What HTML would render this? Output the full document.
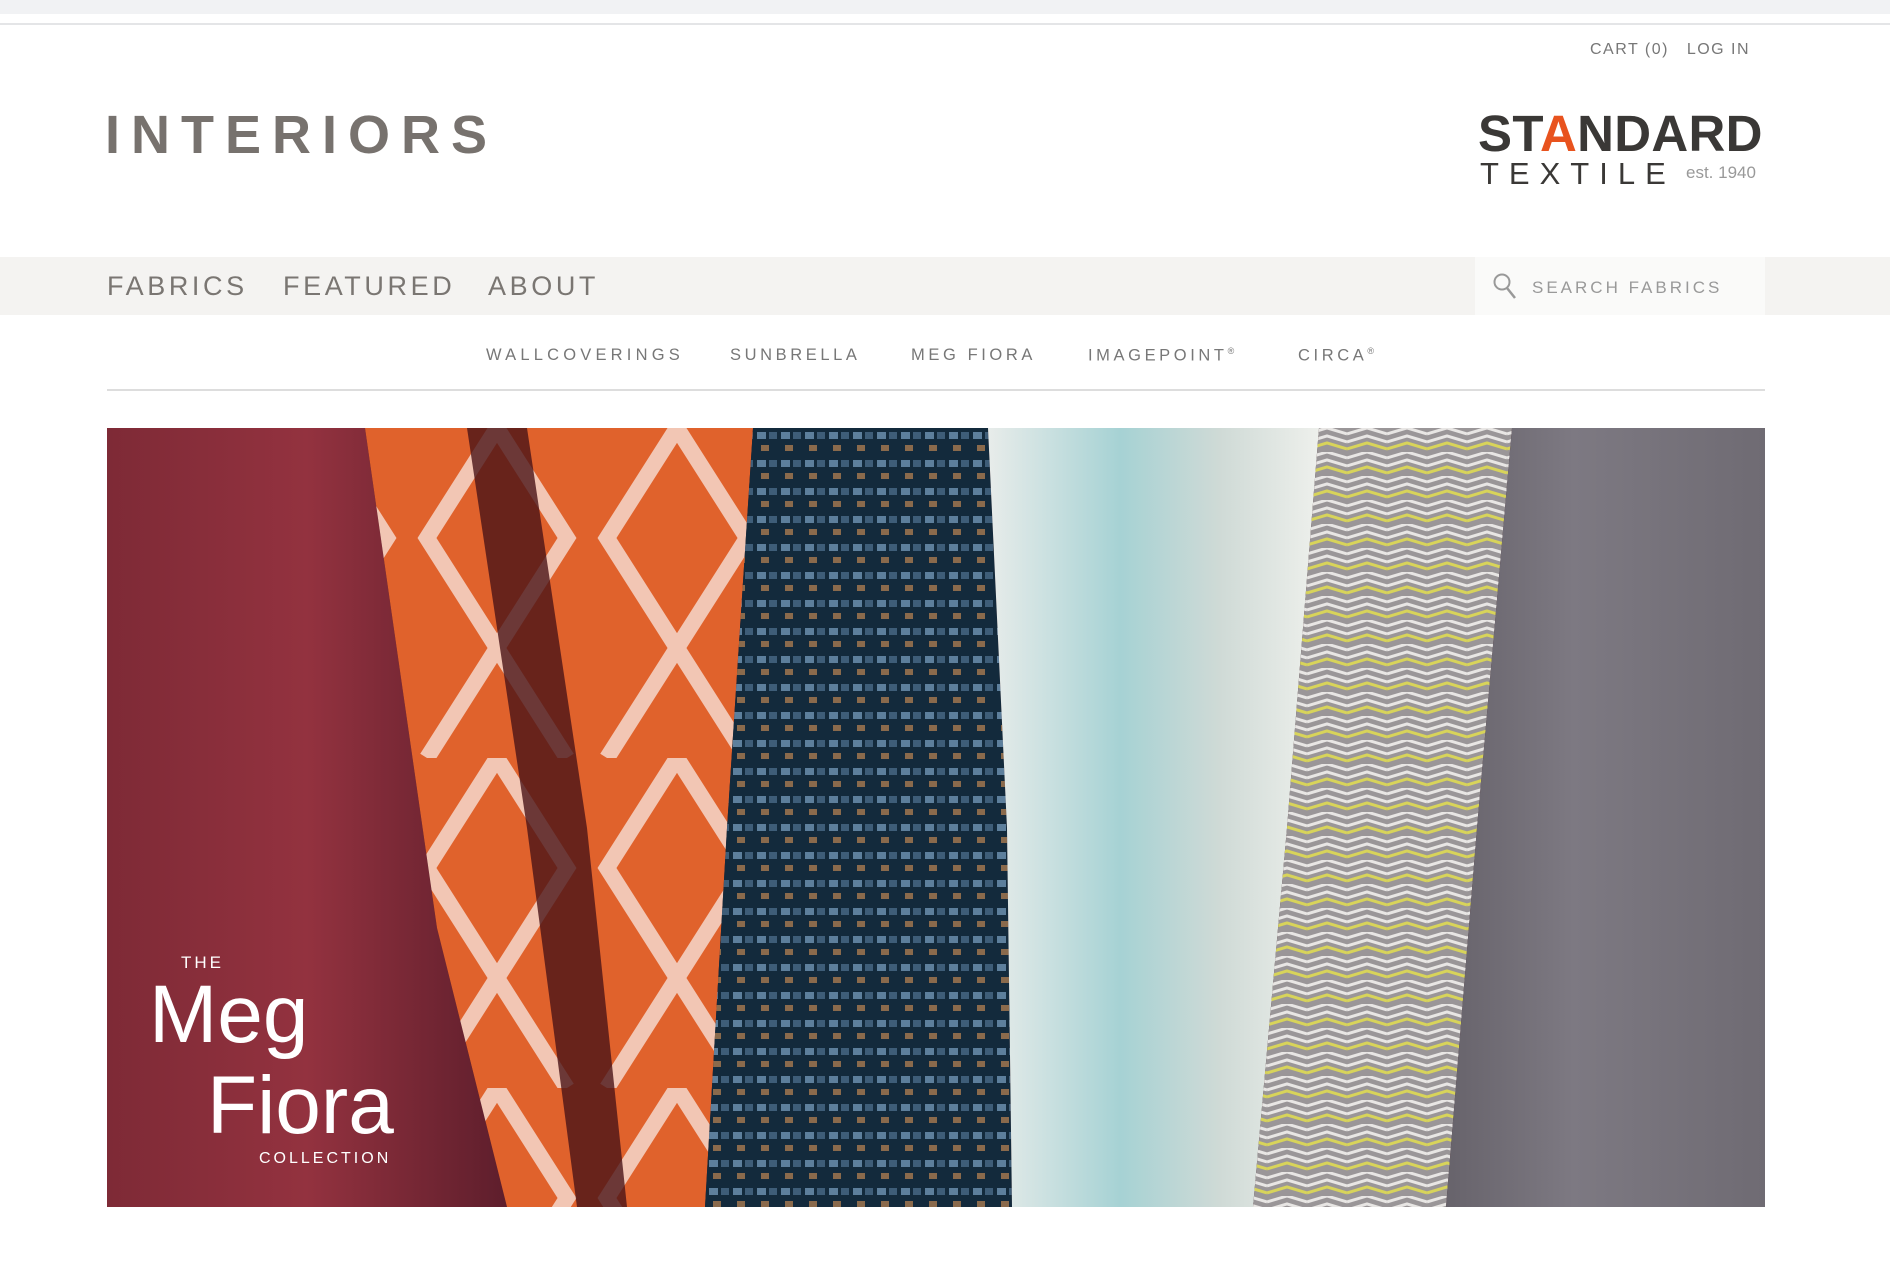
<!DOCTYPE html>
<html><head><meta charset="utf-8"><style>
*{margin:0;padding:0;box-sizing:border-box}
body{width:1890px;height:1288px;background:#fff;font-family:"Liberation Sans",sans-serif;position:relative;overflow:hidden}
.abs{position:absolute;white-space:nowrap}
</style></head><body>
<div class="abs" style="left:0;top:0;width:1890px;height:14px;background:#f1f2f4"></div>
<div class="abs" style="left:0;top:23px;width:1890px;height:2px;background:#e4e5e7"></div>
<div class="abs" style="left:1590px;top:41px;font-size:16px;letter-spacing:1.5px;color:#777">CART (0)&nbsp;&nbsp;&nbsp;LOG IN</div>
<div class="abs" style="left:105px;top:104px;font-size:54px;letter-spacing:11px;color:#77726e;font-weight:bold">INTERIORS</div>
<div class="abs" style="left:1478px;top:104px;font-size:51px;font-weight:bold;color:#3a3836;letter-spacing:0.3px">ST<span style="color:#e8531e">A</span>NDARD</div>
<div class="abs" style="left:1480px;top:156px;font-size:31px;color:#3a3836;letter-spacing:10px">TEXTILE</div>
<div class="abs" style="left:1686px;top:163px;font-size:17px;color:#999">est. 1940</div>
<div class="abs" style="left:0;top:257px;width:1890px;height:58px;background:#f4f3f1"></div>
<div class="abs" style="left:107px;top:271px;font-size:27px;letter-spacing:3.6px;color:#7a7672">FABRICS</div>
<div class="abs" style="left:283px;top:271px;font-size:27px;letter-spacing:3.6px;color:#7a7672">FEATURED</div>
<div class="abs" style="left:488px;top:271px;font-size:27px;letter-spacing:3.6px;color:#7a7672">ABOUT</div>
<div class="abs" style="left:1475px;top:257px;width:290px;height:58px;background:#fafaf9"></div>
<svg class="abs" style="left:1492px;top:272px" width="26" height="28" viewBox="0 0 26 28"><circle cx="10" cy="10" r="7.5" fill="none" stroke="#999" stroke-width="2"/><line x1="15" y1="16" x2="23" y2="26" stroke="#999" stroke-width="2.5"/></svg>
<div class="abs" style="left:1532px;top:278px;font-size:17px;letter-spacing:3px;color:#999">SEARCH FABRICS</div>
<div class="abs" style="left:486px;top:346px;font-size:16.5px;letter-spacing:4.2px;color:#777">WALLCOVERINGS</div>
<div class="abs" style="left:730px;top:346px;font-size:16.5px;letter-spacing:3.6px;color:#777">SUNBRELLA</div>
<div class="abs" style="left:911px;top:346px;font-size:16.5px;letter-spacing:3.6px;color:#777">MEG FIORA</div>
<div class="abs" style="left:1088px;top:346px;font-size:16.5px;letter-spacing:3.6px;color:#777">IMAGEPOINT<sup style="font-size:9px">®</sup></div>
<div class="abs" style="left:1298px;top:346px;font-size:16.5px;letter-spacing:3.6px;color:#777">CIRCA<sup style="font-size:9px">®</sup></div>
<div class="abs" style="left:107px;top:389px;width:1658px;height:2px;background:#ddd"></div>
<svg class="abs" style="left:107px;top:428px" width="1658" height="779" viewBox="0 0 1658 779">
<defs>
<linearGradient id="mar" x1="0" x2="1"><stop offset="0" stop-color="#7e2a36"/><stop offset=".5" stop-color="#93323f"/><stop offset="1" stop-color="#5e1e2c"/></linearGradient>
<pattern id="hex" width="180" height="330" patternUnits="userSpaceOnUse" x="300"><rect width="180" height="330" fill="#e0622c"/><path d="M90 0 L20 110 L90 220 L160 110 Z M90 220 L20 330 M90 220 L160 330" fill="none" stroke="#f2c6b4" stroke-width="16"/></pattern>
<pattern id="chk" width="24" height="28" patternUnits="userSpaceOnUse"><rect width="24" height="28" fill="#132a3c"/><rect x="2" y="4" width="9" height="7" fill="#5d7f9c"/><rect x="14" y="4" width="8" height="7" fill="#3e5d78"/><rect x="6" y="17" width="8" height="6" fill="#8a6a4c"/></pattern>
<linearGradient id="aq" x1="0" x2="1"><stop offset="0" stop-color="#e8ecea"/><stop offset=".4" stop-color="#a6d2d4"/><stop offset=".7" stop-color="#cfdad6"/><stop offset="1" stop-color="#eef0ec"/></linearGradient>
<pattern id="zz" width="40" height="24" patternUnits="userSpaceOnUse"><rect width="40" height="24" fill="#9a9698"/><path d="M0 6 L20 0 L40 6 M0 14 L20 8 L40 14" fill="none" stroke="#e8e6e4" stroke-width="3"/><path d="M0 21 L20 15 L40 21" fill="none" stroke="#d8d45a" stroke-width="3"/></pattern>
<linearGradient id="gr" x1="0" x2="1"><stop offset="0" stop-color="#67636b"/><stop offset=".4" stop-color="#7d7982"/><stop offset="1" stop-color="#6f6b73"/></linearGradient>
</defs>
<rect width="1658" height="779" fill="#3a1418"/>
<polygon points="0,0 258,0 330,500 400,779 0,779" fill="url(#mar)"/>
<polygon points="258,0 646,0 620,400 598,779 400,779 330,500" fill="url(#hex)"/>
<polygon points="360,0 420,0 480,400 520,779 470,779 420,400" fill="#4a1418" opacity=".8"/>
<polygon points="646,0 881,0 900,400 905,779 598,779 620,400" fill="url(#chk)"/>
<polygon points="881,0 1212,0 1180,400 1146,779 905,779 900,400" fill="url(#aq)"/>
<polygon points="1212,0 1405,0 1370,400 1339,779 1146,779 1180,400" fill="url(#zz)"/>
<polygon points="1405,0 1658,0 1658,779 1339,779 1370,400" fill="url(#gr)"/>
<g fill="#fff" font-family="Liberation Sans,sans-serif">
<text x="74" y="540" font-size="17" letter-spacing="3">THE</text>
<text x="42" y="614" font-size="82">Meg</text>
<text x="100" y="705" font-size="82">Fiora</text>
<text x="152" y="735" font-size="16" letter-spacing="3">COLLECTION</text>
</g>
</svg>
</body></html>
